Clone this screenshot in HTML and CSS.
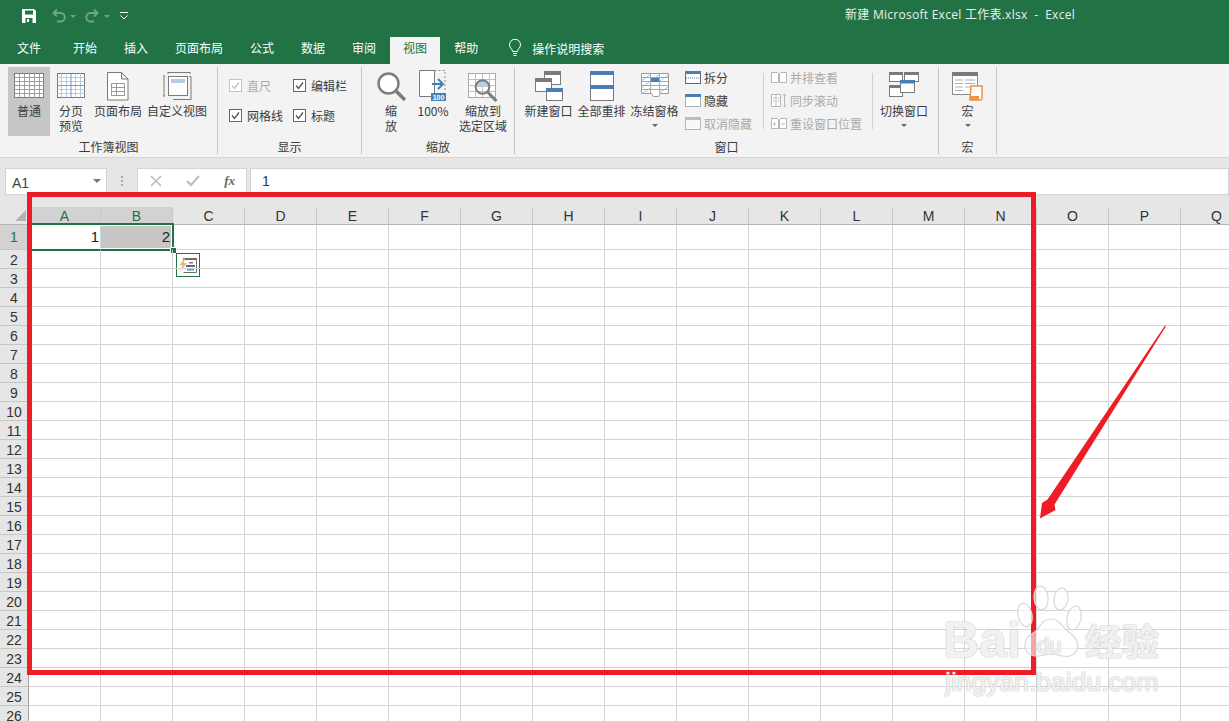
FILE: index.html
```html
<!DOCTYPE html>
<html lang="zh-CN">
<head>
<meta charset="utf-8">
<title>新建 Microsoft Excel 工作表.xlsx - Excel</title>
<link rel="stylesheet" href="styles.css">
</head>
<body>
<div class="app">
  <header class="titlebar">
    <div class="qat">
      <svg class="qat-save" width="16" height="16" viewBox="0 0 16 16"><path fill="#fff" d="M1 1h12l2 2v12H1z"/><path fill="#217346" d="M4 2.500h8v4H4zM4.500 10h7v5h-7z"/><path fill="#fff" d="M6 11h2v3H6z"/></svg>
      <svg class="qat-undo" width="30" height="16" viewBox="0 0 30 16"><path fill="none" stroke="#6fa387" stroke-width="2" d="M6 1.500 2.500 5 6 8.500M3 5h6.500a4.200 4.200 0 0 1 0 8.500H6"/><path fill="#6fa387" d="M19 7h6l-3 3z"/></svg>
      <svg class="qat-redo" width="30" height="16" viewBox="0 0 30 16"><path fill="none" stroke="#6fa387" stroke-width="2" d="M9 1.500 12.500 5 9 8.500M12 5H5.500a4.200 4.200 0 0 0 0 8.500H9"/><path fill="#6fa387" d="M19 7h6l-3 3z"/></svg>
      <svg class="qat-more" width="10" height="10" viewBox="0 0 10 10"><path fill="none" stroke="#fff" d="M1 1.500h8"/><path fill="none" stroke="#fff" d="M1.500 4.500 5 8l3.500-3.500"/></svg>
    </div>
    <div class="doc-title">新建 Microsoft Excel 工作表.xlsx&nbsp; - &nbsp;Excel</div>
  </header>

  <nav class="tabs">
    <span class="tab tab-file">文件</span>
    <span class="tab">开始</span>
    <span class="tab">插入</span>
    <span class="tab">页面布局</span>
    <span class="tab">公式</span>
    <span class="tab">数据</span>
    <span class="tab">审阅</span>
    <span class="tab tab-active">视图</span>
    <span class="tab">帮助</span>
    <span class="tell">
      <svg width="14" height="18" viewBox="0 0 14 18"><path fill="none" stroke="#fff" d="M4.500 12.500C4.500 10 1.500 9 1.500 5.800a5.500 5.500 0 0 1 11 0c0 3.200-3 4.200-3 6.700zM5 14.500h4M5.500 16.500h3"/></svg>
      操作说明搜索
    </span>
  </nav>

  <section class="ribbon">
    <div class="group g-views">
      <div class="group-body">
        <div class="big w42 big-on">
          <span class="ico ico-low"><svg width="31" height="26" viewBox="0 0 31 26"><rect x=".5" y=".5" width="29" height="24" fill="#fff" stroke="#7a7a7a"/><path fill="none" stroke="#a0a0a0" d="M.5 4.500h29M.5 8.500h29M.5 12.500h29M.5 16.500h29M.5 20.500h29M5.500.5v24M10.500.5v24M15.500.5v24M20.500.5v24M25.500.5v24"/></svg></span>
          <span class="lbl">普通</span>
        </div>
        <div class="big w42">
          <span class="ico ico-low"><svg width="29" height="26" viewBox="0 0 29 26"><rect x=".5" y=".5" width="27" height="24" fill="#fff" stroke="#7a7a7a"/><path fill="none" stroke="#b5cbe4" d="M.5 4.500h27M.5 8.500h27M.5 16.500h27M.5 20.500h27M4.500.5v24M9.500.5v24M18.500.5v24M23.500.5v24"/><path fill="none" stroke="#6f9bd0" d="M14 .5v24M.5 12.500h27"/></svg></span>
          <span class="lbl">分页<br>预览</span>
        </div>
        <div class="big w52">
          <span class="ico"><svg width="22" height="29" viewBox="0 0 22 29"><path fill="#fff" stroke="#7a7a7a" d="M.5.500h14l6.500 6.500v21H.5zM14.500.5V7H21"/><path fill="none" stroke="#9a9a9a" d="M4.500 11.500h13v12h-13zM4.500 15.500h13M4.500 19.500h13M9.500 11.500v12"/></svg></span>
          <span class="lbl">页面布局</span>
        </div>
        <div class="big w66">
          <span class="ico"><svg width="29" height="28" viewBox="0 0 29 28"><path fill="none" stroke="#7a7a7a" d="M1 4v20M0 4h2M0 24h2M5 .5h22M5 0v2M27 0v2M10 27.500h18v-23h-2"/><rect x="5.500" y="4.500" width="19" height="19" fill="#fff" stroke="#7a7a7a"/><rect x="8" y="7" width="14" height="4" fill="#b5cbe4"/></svg></span>
          <span class="lbl">自定义视图</span>
        </div>
      </div>
      <div class="group-label">工作簿视图</div>
    </div>

    <div class="group g-show">
      <div class="group-body checks">
        <label class="check check-off"><span class="box"><svg width="13" height="13" viewBox="0 0 13 13"><path fill="none" stroke="#c4c4c4" stroke-width="1.300" d="m3 6.500 2.500 3L10 3.500"/></svg></span>直尺</label>
        <label class="check"><span class="box"><svg width="13" height="13" viewBox="0 0 13 13"><path fill="none" stroke="#555" stroke-width="1.300" d="m3 6.500 2.500 3L10 3.500"/></svg></span>编辑栏</label>
        <label class="check"><span class="box"><svg width="13" height="13" viewBox="0 0 13 13"><path fill="none" stroke="#555" stroke-width="1.300" d="m3 6.500 2.500 3L10 3.500"/></svg></span>网格线</label>
        <label class="check"><span class="box"><svg width="13" height="13" viewBox="0 0 13 13"><path fill="none" stroke="#555" stroke-width="1.300" d="m3 6.500 2.500 3L10 3.500"/></svg></span>标题</label>
      </div>
      <div class="group-label">显示</div>
    </div>

    <div class="group g-zoom">
      <div class="group-body">
        <div class="big w40">
          <span class="ico"><svg width="29" height="29" viewBox="0 0 29 29"><circle cx="11.500" cy="11.500" r="10" fill="#fff" stroke="#7d7d7d" stroke-width="2.400"/><path stroke="#7d7d7d" stroke-width="3.600" d="m19 19 9 9"/></svg></span>
          <span class="lbl">缩<br>放</span>
        </div>
        <div class="big w44">
          <span class="ico ico-top"><svg width="28" height="31" viewBox="0 0 28 31"><path fill="#fff" stroke="#7a7a7a" d="M.5.500h15v26H.5z"/><path fill="none" stroke="#8a8a8a" stroke-dasharray="2 2" d="M15.500.5H26v20"/><path fill="none" stroke="#3f7ebc" stroke-width="2" d="M13 14h11M19 9l5 5-5 5"/><rect x="12" y="23" width="15" height="8" fill="#4a7fb5"/><text x="19.500" y="30" class="ico-100">100</text></svg></span>
          <span class="lbl">100%</span>
        </div>
        <div class="big w56">
          <span class="ico ico-low"><svg width="30" height="29" viewBox="0 0 30 29"><rect x=".5" y=".5" width="27" height="24" fill="#fff" stroke="#a8a8a8"/><path fill="none" stroke="#c0c0c0" d="M.5 6.500h27M.5 12.500h27M.5 18.500h27M7.500.5v24M14.500.5v24M21.500.5v24"/><path fill="#b5cfe6" d="M8 14a6.500 6.500 0 0 1 13 0z"/><circle cx="14.500" cy="14" r="6.800" fill="none" stroke="#7d7d7d" stroke-width="2"/><path stroke="#7d7d7d" stroke-width="3" d="m19.500 19 9 9"/></svg></span>
          <span class="lbl">缩放到<br>选定区域</span>
        </div>
      </div>
      <div class="group-label">缩放</div>
    </div>

    <div class="group g-window">
      <div class="group-body">
        <div class="big w53">
          <span class="ico ico-up"><svg width="28" height="30" viewBox="0 0 28 30"><g fill="#fff" stroke="#7a7a7a"><rect x="9.500" y=".5" width="16" height="13"/><rect x=".5" y="7.500" width="16" height="13"/><rect x="11.500" y="17.500" width="16" height="12"/></g><rect x="9" y="0" width="17" height="4" fill="#7a7a7a"/><rect x="0" y="7" width="17" height="4" fill="#7a7a7a"/><rect x="11" y="17" width="17" height="4" fill="#4a7fb5"/></svg></span>
          <span class="lbl">新建窗口</span>
        </div>
        <div class="big w53">
          <span class="ico ico-up"><svg width="24" height="30" viewBox="0 0 24 30"><rect x=".5" y=".5" width="23" height="29" fill="#fff" stroke="#7a7a7a"/><rect width="24" height="4" fill="#4a7fb5"/><rect y="14" width="24" height="4" fill="#4a7fb5"/></svg></span>
          <span class="lbl">全部重排</span>
        </div>
        <div class="big w53">
          <span class="ico ico-low"><svg width="28" height="25" viewBox="0 0 28 25"><path fill="#fff" stroke="#9a9a9a" d="M.5.500h27v20h-8l-2 3h-5l-2-3h-10z"/><path fill="none" stroke="#a8c4e2" d="M.5 8 10 1M10 8l9-7M19 8l8-6M.5 15 8 9M.5 21l9-6M18 20l9-6"/><path fill="none" stroke="#a8a8a8" d="M.5 4.500h27M.5 8.500h27M.5 12.500h27M.5 16.500h27M9.500.5v20M18.500.5v20"/><rect x="10" y="5" width="8" height="4" fill="#4a7fb5"/></svg></span>
          <span class="lbl">冻结窗格</span>
          <span class="caret"></span>
        </div>
        <div class="small-col col-a">
          <div class="small"><svg width="16" height="13" viewBox="0 0 16 13"><rect x=".5" y=".5" width="15" height="12" fill="#fff" stroke="#666"/><rect width="16" height="3" fill="#4a7fb5"/><path stroke="#4a7fb5" stroke-dasharray="1 1" d="M1 7h14"/></svg>拆分</div>
          <div class="small"><svg width="16" height="13" viewBox="0 0 16 13"><rect x=".5" y=".5" width="15" height="12" fill="#fff" stroke="#666" stroke-dasharray="1 1"/><rect width="16" height="3" fill="#4a7fb5"/></svg>隐藏</div>
          <div class="small off"><svg width="16" height="13" viewBox="0 0 16 13"><rect x=".5" y=".5" width="15" height="12" fill="#f8f8f8" stroke="#b5b5b5"/><rect width="16" height="3" fill="#bdbdbd"/></svg>取消隐藏</div>
        </div>
        <div class="small-col col-b">
          <div class="small off"><svg width="16" height="13" viewBox="0 0 16 13"><path fill="#fff" stroke="#b5b5b5" d="M.5 1.500h6l1 1v9h-7zM8.500 2.500l1-1h6v10h-7z"/></svg>并排查看</div>
          <div class="small off"><svg width="16" height="15" viewBox="0 0 16 15"><path fill="#fff" stroke="#b5b5b5" d="M.5 1.500h9v12h-9z"/><path fill="none" stroke="#b5b5b5" d="M5 1.500v12M2 5h2M2 8h2M6.500 5h2M6.500 8h2M13.500 1v13M12 2.500 13.500 1 15 2.500M12 12.500 13.500 14l1.500-1.500"/></svg>同步滚动</div>
          <div class="small off"><svg width="16" height="13" viewBox="0 0 16 13"><path fill="#fff" stroke="#b5b5b5" d="M.5 1.500h6l1 1v9h-7zM8.500 2.500l1-1h6v10h-7z"/><path fill="none" stroke="#b5b5b5" d="M2 7h3M3.500 5.500v3M10 7h4"/></svg>重设窗口位置</div>
        </div>
        <div class="big w62">
          <span class="ico"><svg width="30" height="25" viewBox="0 0 30 25"><g fill="#fff" stroke="#7a7a7a"><rect x=".5" y=".5" width="13" height="9"/><rect x="15.500" y=".5" width="14" height="9"/><rect x=".5" y="13.500" width="13" height="11"/></g><rect width="14" height="3" fill="#7a7a7a"/><rect x="15" width="15" height="3" fill="#7a7a7a"/><rect y="13" width="14" height="3" fill="#7a7a7a"/><rect x="11.500" y="8.500" width="14" height="12" fill="#fff" stroke="#7a7a7a"/><rect x="11" y="8" width="15" height="3.500" fill="#4a7fb5"/></svg></span>
          <span class="lbl">切换窗口</span>
          <span class="caret"></span>
        </div>
      </div>
      <div class="group-label">窗口</div>
    </div>

    <div class="group g-macro">
      <div class="group-body">
        <div class="big w57">
          <span class="ico"><svg width="32" height="29" viewBox="0 0 32 29"><rect x=".5" y=".5" width="25" height="22" fill="#fff" stroke="#8a8a8a"/><rect width="26" height="4" fill="#7a7a7a"/><path fill="none" stroke="#b0b0b0" d="M3 8h8M13 8h10M3 11.500h8M13 11.500h10M3 15h8M13 15h10M3 18.500h8"/><path fill="#fff" stroke="#e8954a" stroke-width="1.500" d="M19 14h11v12a2 2 0 0 1-2 2H18z"/><path fill="#e8954a" d="M18 24h9v4H17z"/></svg></span>
          <span class="lbl">宏</span>
          <span class="caret"></span>
        </div>
      </div>
      <div class="group-label">宏</div>
    </div>
  </section>

  <section class="formula">
    <div class="namebox"><span>A1</span><i class="name-caret"></i></div>
    <div class="grip"></div>
    <div class="fx-btns">
      <svg width="12" height="12" viewBox="0 0 12 12"><path stroke="#bcbcbc" stroke-width="1.500" d="m1 1 10 10M11 1 1 11"/></svg>
      <svg width="14" height="12" viewBox="0 0 14 12"><path fill="none" stroke="#bcbcbc" stroke-width="2" d="m1 6 4 4 8-9"/></svg>
      <span class="fx">fx</span>
    </div>
    <div class="fx-input">1</div>
  </section>

  <main class="sheet">
    <div class="col-heads">
      <div class="corner"><i></i></div>
      <span class="ch ch-on">A</span><span class="ch ch-on">B</span><span class="ch">C</span><span class="ch">D</span><span class="ch">E</span><span class="ch">F</span><span class="ch">G</span><span class="ch">H</span><span class="ch">I</span><span class="ch">J</span><span class="ch">K</span><span class="ch">L</span><span class="ch">M</span><span class="ch">N</span><span class="ch">O</span><span class="ch">P</span><span class="ch">Q</span>
    </div>
    <div class="row row-first">
      <div class="rh rh-on">1</div>
      <div class="cells">
        <div class="cell">1</div>
        <div class="cell cell-sel">2</div>
        <div class="selection"></div>
        <div class="handle"></div>
        <div class="quick"><svg width="18" height="16" viewBox="0 0 18 16"><path fill="none" stroke="#6e6e6e" d="M4.500 1.500h13v14h-13"/><path fill="#6e6e6e" d="M4 1h14v2H4z"/><path fill="#f0b878" d="M6 0 .5 8.500h3L1 15l7-9H5z"/><path fill="#d9534f" d="M10 5h4v1.500h-4z"/><path fill="#3b6fb0" d="M7 8h9v2H7z"/><path fill="#5aa58a" d="M8 11.500h7v2H8z"/></svg></div>
      </div>
    </div>
    <div class="row"><div class="rh">2</div><div class="cells"></div></div>
    <div class="row"><div class="rh">3</div><div class="cells"></div></div>
    <div class="row"><div class="rh">4</div><div class="cells"></div></div>
    <div class="row"><div class="rh">5</div><div class="cells"></div></div>
    <div class="row"><div class="rh">6</div><div class="cells"></div></div>
    <div class="row"><div class="rh">7</div><div class="cells"></div></div>
    <div class="row"><div class="rh">8</div><div class="cells"></div></div>
    <div class="row"><div class="rh">9</div><div class="cells"></div></div>
    <div class="row"><div class="rh">10</div><div class="cells"></div></div>
    <div class="row"><div class="rh">11</div><div class="cells"></div></div>
    <div class="row"><div class="rh">12</div><div class="cells"></div></div>
    <div class="row"><div class="rh">13</div><div class="cells"></div></div>
    <div class="row"><div class="rh">14</div><div class="cells"></div></div>
    <div class="row"><div class="rh">15</div><div class="cells"></div></div>
    <div class="row"><div class="rh">16</div><div class="cells"></div></div>
    <div class="row"><div class="rh">17</div><div class="cells"></div></div>
    <div class="row"><div class="rh">18</div><div class="cells"></div></div>
    <div class="row"><div class="rh">19</div><div class="cells"></div></div>
    <div class="row"><div class="rh">20</div><div class="cells"></div></div>
    <div class="row"><div class="rh">21</div><div class="cells"></div></div>
    <div class="row"><div class="rh">22</div><div class="cells"></div></div>
    <div class="row"><div class="rh">23</div><div class="cells"></div></div>
    <div class="row"><div class="rh">24</div><div class="cells"></div></div>
    <div class="row"><div class="rh">25</div><div class="cells"></div></div>
    <div class="row"><div class="rh">26</div><div class="cells"></div></div>
  </main>

  <div class="red-box"></div>
  <svg class="arrow" width="1229" height="721" viewBox="0 0 1229 721"><polygon fill="#ee1c25" points="1165,325.500 1165.800,326.500 1054.500,504.500 1055.500,510 1040,518.500 1042,503 1047.500,499.500"/></svg>

  <div class="watermark">
    <svg class="paw" width="70" height="80" viewBox="0 0 70 80"><g fill="#fff" fill-opacity=".6" stroke="#d8d8d8" stroke-width="1.200"><ellipse cx="7" cy="26" rx="7" ry="12" transform="rotate(-12 7 26)"/><ellipse cx="23" cy="9" rx="7" ry="12" transform="rotate(-5 23 9)"/><ellipse cx="43" cy="10" rx="7" ry="11" transform="rotate(8 43 10)"/><ellipse cx="56" cy="29" rx="7" ry="12" transform="rotate(12 56 29)"/><path d="M33 30c9 0 12 9 19 14 8 6 9 12 7 17-3 6-9 7-14 6-5-1-8-2-13-2-6 0-9 3-15 2-7-1-11-6-10-13 1-7 8-9 12-13 4-5 6-11 14-11z"/></g></svg>
    <span class="wm-bai">Bai</span>
    <span class="wm-du">du</span>
    <span class="wm-cn">经验</span>
    <span class="wm-url">jingyan.baidu.com</span>
  </div>
</div>
</body>
</html>
```
FILE: styles.css
```css
* { box-sizing: border-box; }
html, body { margin: 0; padding: 0; }
body {
  width: 1229px;
  height: 721px;
  overflow: hidden;
  background: #fff;
  font-family: "Noto Sans CJK SC", "Liberation Sans", sans-serif;
  font-size: 12px;
  color: #333;
}
.app { position: relative; width: 1229px; height: 721px; overflow: hidden; }

.titlebar {
  height: 37px;
  background: #217346;
  display: flex;
  align-items: flex-start;
  justify-content: space-between;
  color: #fff;
}
.qat { display: flex; align-items: center; height: 32px; padding-left: 21px; }
.qat-save { margin-right: 14px; }
.qat-undo { margin-right: 4px; }
.qat-more { margin-left: 4px; }
.doc-title {
  padding: 6px 154px 0 0;
  font-family: "Open Sans", "Noto Sans CJK SC", sans-serif;
  font-size: 12px;
  letter-spacing: .27px;
  line-height: 18px;
  color: #e8f1ec;
}

.tabs {
  height: 27px;
  background: #217346;
  display: flex;
  gap: 1px;
  padding-left: 4px;
  color: #fff;
}
.tab { padding: 0 13px; line-height: 22px; height: 27px; }
.tab-file { margin-right: 5px; }
.tab-active { background: #f3f3f3; color: #217346; }
.tell { display: flex; align-items: center; gap: 10px; margin-left: 16px; height: 22px; }

.ribbon {
  height: 94px;
  background: #f3f3f3;
  border-bottom: 1px solid #d6d6d6;
  display: flex;
  align-items: flex-start;
  padding-top: 3px;
}
.group {
  height: 87px;
  border-right: 1px solid #c6c6c6;
  display: flex;
  flex-direction: column;
}
.group-body { height: 72px; display: flex; align-items: flex-start; }
.group-label { line-height: 15px; text-align: center; color: #3c3c3c; }
.g-views { width: 218px; }
.g-views .group-body { padding-left: 8px; }
.g-show { width: 144px; }
.g-zoom { width: 153px; }
.g-zoom .group-body { padding-left: 9px; }
.g-window { width: 424px; }
.g-window .group-body { padding-left: 7px; }
.g-macro { width: 58px; }

.big {
  height: 69px;
  padding-top: 3px;
  display: flex;
  flex-direction: column;
  align-items: center;
  flex: none;
}
.big-on { background: #c6c6c6; }
.ico { height: 33px; padding-top: 2px; display: flex; align-items: flex-start; justify-content: center; }
.ico-low { padding-top: 3px; }
.ico-up { padding-top: 1px; }
.ico-top { padding-top: 0; }
.big .lbl { line-height: 15px; text-align: center; white-space: nowrap; color: #3c3c3c; }
.w40 { width: 40px; } .w42 { width: 42px; } .w44 { width: 44px; } .w52 { width: 52px; }
.w53 { width: 53px; } .w56 { width: 56px; } .w57 { width: 57px; } .w62 { width: 62px; } .w66 { width: 66px; }
.caret {
  width: 0; height: 0; margin-top: 6px;
  border-left: 3px solid transparent;
  border-right: 3px solid transparent;
  border-top: 3px solid #666;
}
.ico-100 { font: bold 7px "Liberation Sans", sans-serif; fill: #fff; text-anchor: middle; }

.checks {
  display: grid;
  grid-template-columns: 64px 1fr;
  grid-auto-rows: 30px;
  padding: 3px 0 0 11px;
}
.check { display: flex; align-items: center; gap: 5px; white-space: nowrap; height: 30px; color: #3c3c3c; }
.box { width: 13px; height: 13px; flex: none; background: #fff; border: 1px solid #666; display: flex; align-items: center; justify-content: center; }
.box svg { flex: none; }
.check-off { color: #aaa; }
.check-off .box { border-color: #c4c4c4; }

.small-col { display: flex; flex-direction: column; height: 69px; flex: none; }
.col-a { width: 82px; padding-left: 4px; margin-top: -1px; }
.col-b { width: 110px; padding-left: 7px; border-left: 1px solid #d0d0d0; border-right: 1px solid #d0d0d0; height: 56px; margin-top: 6px; }
.col-b .small:first-child { margin-top: -7px; }
.small { height: 23px; display: flex; align-items: center; gap: 3px; white-space: nowrap; color: #3c3c3c; flex: none; }
.small.off { color: #aaa; }

.formula {
  height: 49px;
  background: #e6e6e6;
  padding-top: 10px;
  display: flex;
  align-items: flex-start;
}
.namebox {
  margin-left: 5px;
  width: 102px;
  height: 27px;
  background: #fff;
  border: 1px solid #d4d4d4;
  display: flex;
  align-items: center;
  justify-content: space-between;
  padding: 2px 5px 0 6px;
  font: 14px "Liberation Sans", sans-serif;
  color: #444;
}
.name-caret { width: 0; height: 0; margin-bottom: 4px; border-left: 4px solid transparent; border-right: 4px solid transparent; border-top: 4px solid #777; }
.grip { width: 2px; height: 10px; margin: 8px 14px 0 14px; border-left: 2px dotted #aaa; }
.fx-btns {
  width: 110px;
  height: 27px;
  background: #fff;
  border: 1px solid #d4d4d4;
  display: flex;
  align-items: center;
  justify-content: space-between;
  padding: 0 11px 2px 12px;
}
.fx { font: italic bold 13px "Liberation Serif", serif; color: #666; }
.fx-input {
  margin-left: 3px;
  flex: 1;
  height: 27px;
  background: #fff;
  border: 1px solid #d4d4d4;
  padding: 3px 0 0 11px;
  font: 14px/18px "Liberation Sans", sans-serif;
  color: #1f3a5f;
}

.sheet { height: 514px; overflow: hidden; }
.col-heads { display: flex; height: 18px; background: #e6e6e6; border-bottom: 1px solid #b5b5b5; }
.corner { width: 29px; flex: none; position: relative; border-right: 1px solid #b5b5b5; }
.corner i { position: absolute; left: 15px; top: 3px; border-left: 11px solid transparent; border-bottom: 11px solid #b4b4b4; }
.ch { width: 72px; flex: none; text-align: center; font: 14px/19px "Liberation Sans", sans-serif; color: #333; border-right: 1px solid #c6c6c6; }
.ch-on { background: #d2d2d2; color: #217346; }

.row { display: flex; height: 19px; }
.row-first { height: 25px; }
.rh {
  width: 29px; flex: none;
  background: #e6e6e6;
  border-right: 1px solid #a0a0a0;
  border-bottom: 1px solid #c6c6c6;
  text-align: center;
  font: 14px/21px "Liberation Sans", sans-serif;
  color: #333;
}
.row-first .rh { line-height: 25px; }
.rh-on { background: #d2d2d2; color: #217346; }
.cells {
  flex: 1;
  position: relative;
  display: flex;
  border-bottom: 1px solid #d4d4d4;
  background: repeating-linear-gradient(to right, transparent 0 71px, #d4d4d4 71px 72px);
}
.cell { width: 72px; flex: none; text-align: right; padding-right: 2px; font: 15px/24px "Liberation Sans", sans-serif; color: #222; }
.cell-sel { background: #c6c6c6; width: 71px; padding-right: 2px; }
.selection {
  position: absolute; left: 0; top: -2px; width: 145px; height: 28px;
  border: 2px solid #217346;
  box-shadow: inset 0 0 0 1px #fff;
}
.handle {
  position: absolute; left: 141px; top: 22px; width: 7px; height: 7px;
  background: #217346; border: 1px solid #fff;
}
.quick {
  position: absolute; left: 147px; top: 28px; width: 24px; height: 24px;
  background: #fff; border: 1px solid #217346;
  display: flex; align-items: center; justify-content: center;
}

.red-box {
  position: absolute; left: 27px; top: 192px; width: 1009px; height: 483px;
  border: 5px solid #ee1c25;
}
.arrow { position: absolute; left: 0; top: 0; }

.watermark { position: absolute; left: 0; top: 0; width: 1229px; height: 721px; }
.paw { position: absolute; left: 1018px; top: 589px; overflow: visible; }
.watermark span {
  position: absolute;
  color: rgba(255, 255, 255, .8);
  text-shadow: 0 0 2px #bbb, 0 0 1px #ccc;
  white-space: nowrap;
}
.wm-bai { left: 943px; top: 612px; font: bold 50px/56px "Liberation Sans", sans-serif; }
.wm-du { left: 1037px; top: 634px; font: 22px/24px "Liberation Sans", sans-serif; }
.wm-cn { left: 1085px; top: 617px; font: bold 37px/46px "Noto Sans CJK SC", sans-serif; }
.wm-url { left: 945px; top: 665px; font: 26.500px/34px "Liberation Sans", sans-serif; }
```
